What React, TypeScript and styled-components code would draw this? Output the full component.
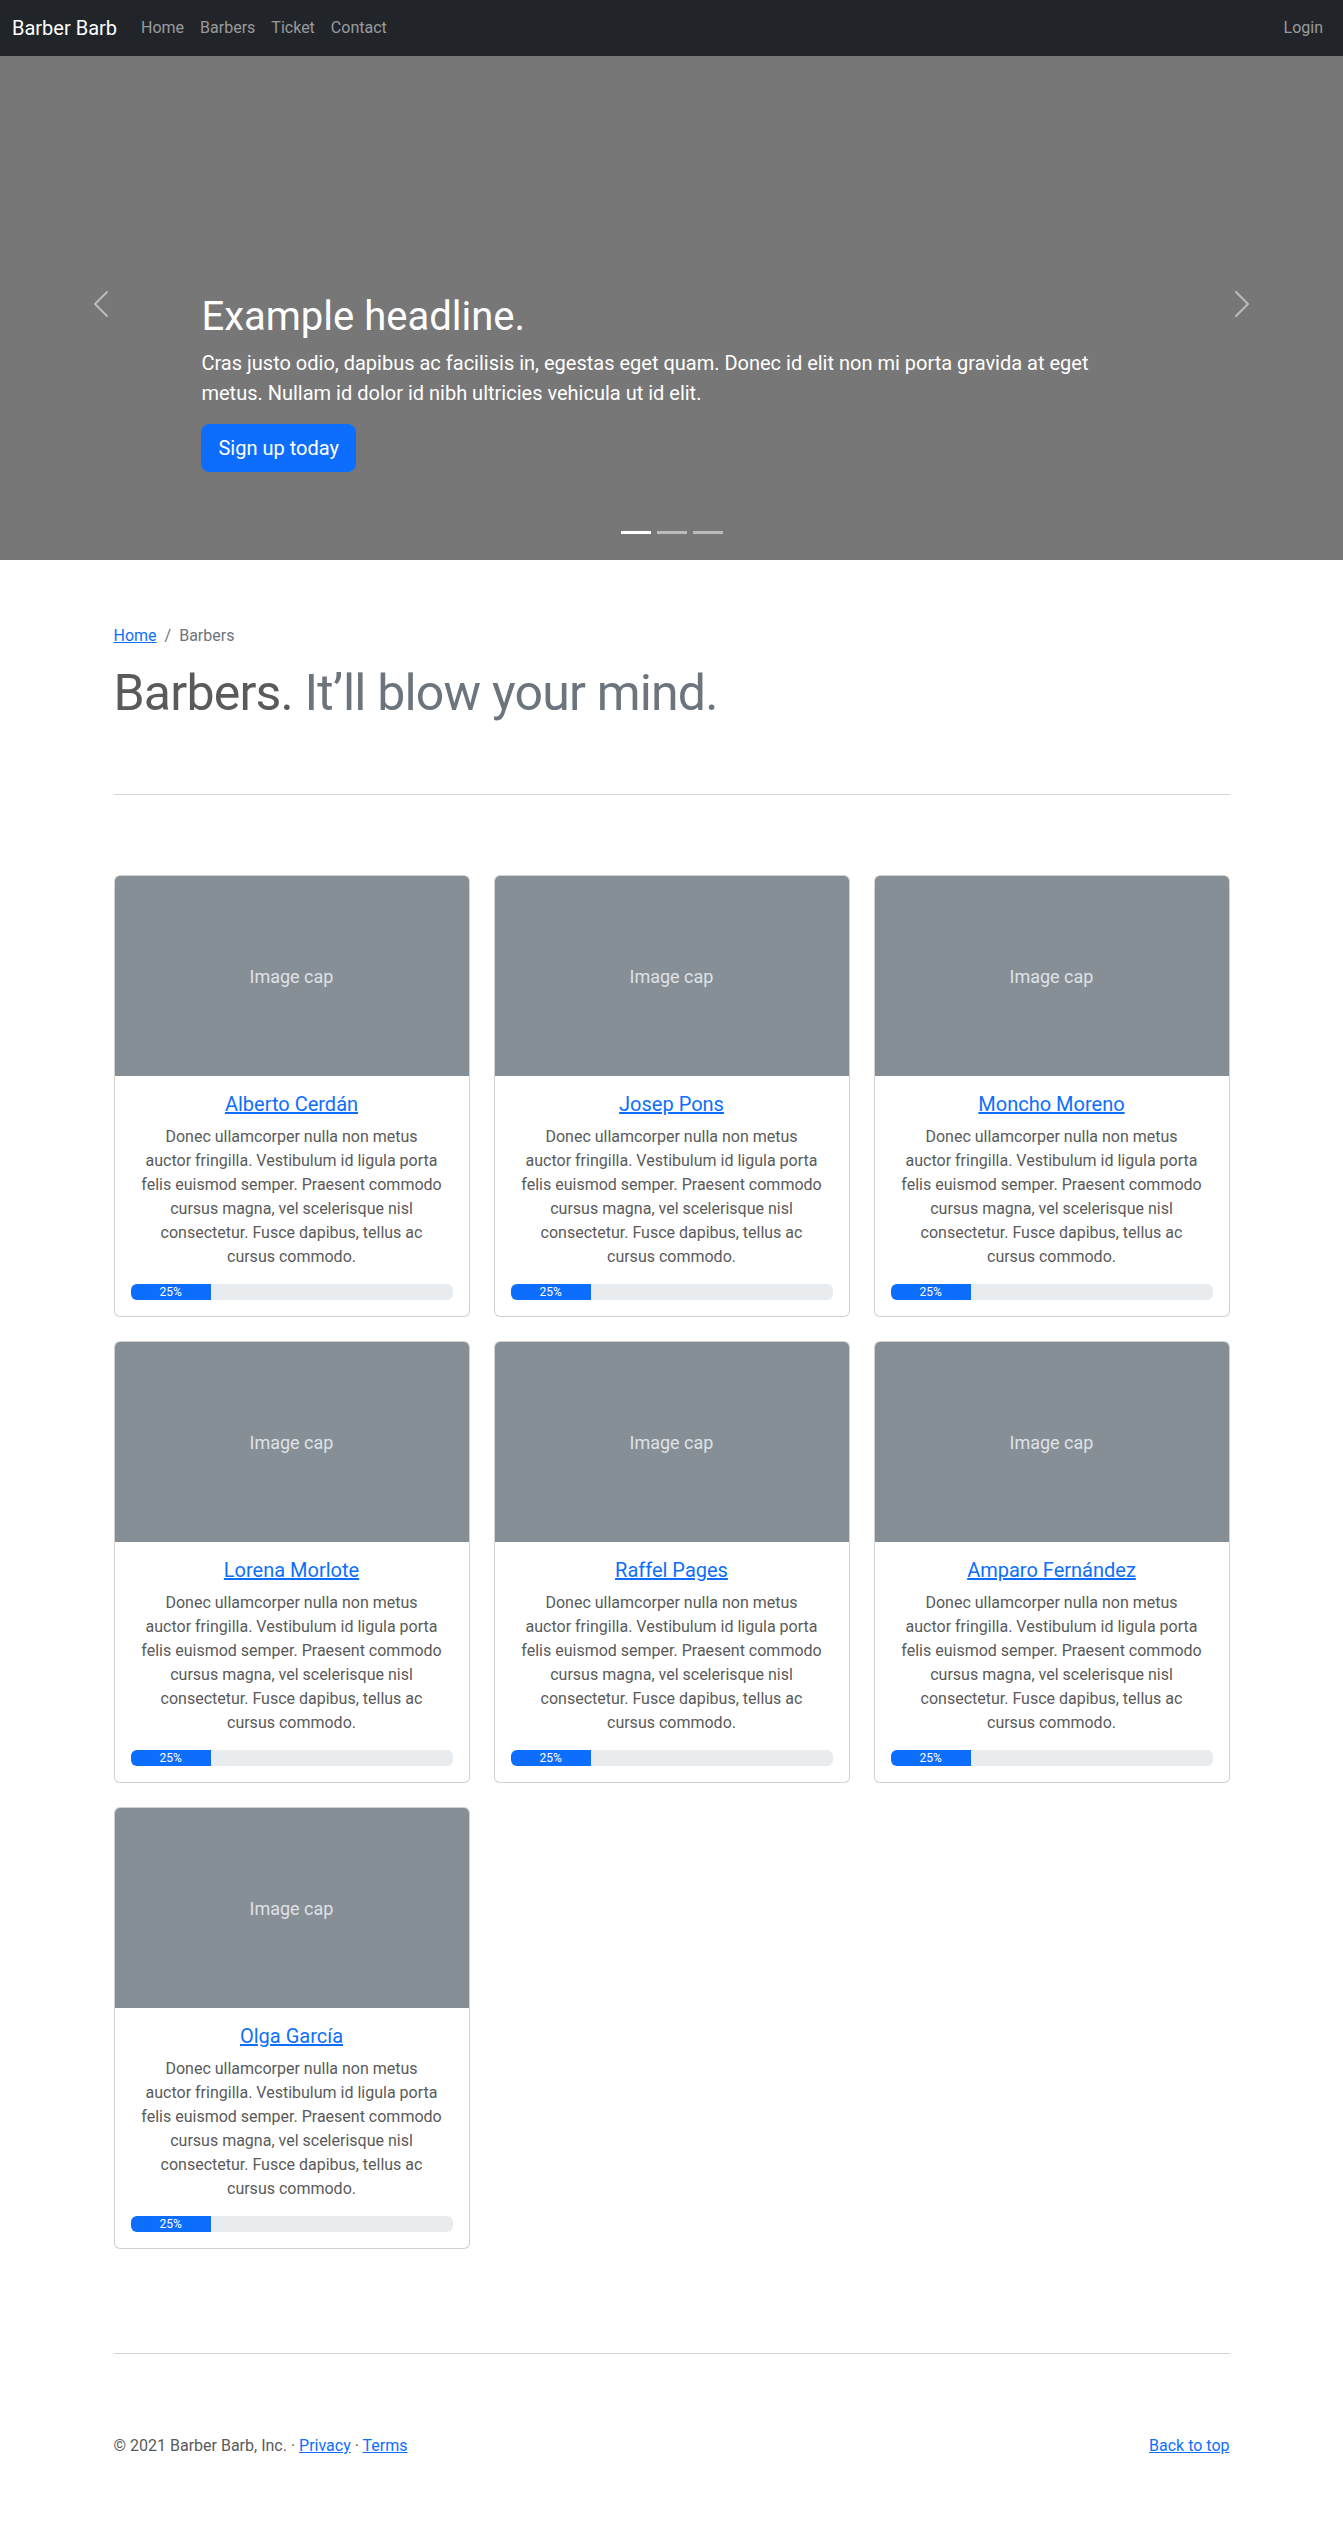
import React from 'react'
import styled, { createGlobalStyle } from 'styled-components'

const GlobalStyle = createGlobalStyle`
  *, *::before, *::after { box-sizing: border-box; }
  body {
    margin: 0;
    padding: 48px 0;
    font-family: Roboto, 'Liberation Sans', Arial, sans-serif;
    font-size: 16px;
    line-height: 1.5;
    color: #5a5a5a;
    background: #fff;
  }
`

const Link = styled.a`
  color: #0d6efd;
  text-decoration: underline;
  cursor: pointer;
`

/* navbar */
const Navbar = styled.nav`
  position: fixed;
  top: 0;
  left: 0;
  right: 0;
  z-index: 1030;
  height: 56px;
  padding: 8px 12px;
  display: flex;
  align-items: center;
  background: #212529;
`
const Brand = styled.a`
  margin-right: 16px;
  padding: 5px 0;
  font-size: 20px;
  line-height: 30px;
  color: #fff;
  text-decoration: none;
`
const NavList = styled.div`
  display: flex;
  flex: 1;
  align-items: center;
`
const NavLink = styled.a`
  padding: 8px;
  line-height: 24px;
  color: rgba(255, 255, 255, 0.55);
  text-decoration: none;
`

/* carousel */
const Carousel = styled.section`
  position: relative;
  height: 512px;
  margin-bottom: 64px;
  padding: 0 15% 48px;
  display: flex;
  align-items: flex-end;
  background: #777;
`
const Caption = styled.div`
  width: 100%;
  padding: 20px 0;
  color: #fff;
`
const Headline = styled.h1`
  margin: 0 0 8px;
  padding-top: 2px;
  font-size: 40px;
  font-weight: 400;
  line-height: 46px;
`
const Lead = styled.p`
  margin: 0 0 16px;
  font-size: 20px;
  line-height: 1.5;
`
const ButtonRow = styled.p`
  margin: 0 0 20px;
`
const PrimaryButton = styled.a`
  display: inline-block;
  padding: 8px 16px;
  font-size: 20px;
  line-height: 30px;
  border: 1px solid #0d6efd;
  border-radius: 8px;
  background: #0d6efd;
  color: #fff;
  text-decoration: none;
`
const Control = styled.button<{ $side: 'prev' | 'next' }>`
  position: absolute;
  top: 0;
  bottom: 0;
  ${p => (p.$side === 'prev' ? 'left: 0;' : 'right: 0;')}
  width: 15%;
  padding: 0;
  border: 0;
  background: none;
  display: flex;
  align-items: center;
  justify-content: center;
  opacity: 0.5;
`
const Indicators = styled.div`
  position: absolute;
  left: 0;
  right: 0;
  bottom: 0;
  margin-bottom: 16px;
  display: flex;
  justify-content: center;
`
const Indicator = styled.span<{ $active?: boolean }>`
  box-sizing: content-box;
  width: 30px;
  height: 3px;
  margin: 0 3px;
  border-top: 10px solid transparent;
  border-bottom: 10px solid transparent;
  background: #fff;
  background-clip: padding-box;
  opacity: ${p => (p.$active ? 1 : 0.5)};
`

/* page */
const Container = styled.div`
  max-width: 1140px;
  margin: 0 auto;
  padding: 0 12px;
`
const Breadcrumb = styled.ol`
  display: flex;
  margin: 0 0 16px;
  padding: 0;
  list-style: none;
`
const Crumb = styled.li<{ $active?: boolean }>`
  color: ${p => (p.$active ? '#6c757d' : 'inherit')};
  &:not(:first-child) {
    padding-left: 8px;
  }
  &:not(:first-child)::before {
    content: '/';
    padding-right: 8px;
    color: #6c757d;
  }
`
const FeatureHeading = styled.h2`
  margin: 0 0 -4px;
  padding-top: 4px;
  font-size: 50px;
  font-weight: 400;
  line-height: 1;
  letter-spacing: -0.8px;
`
const Muted = styled.span`
  color: #6c757d;
`
const Divider = styled.hr`
  margin: 80px 0;
  height: 0;
  border: 0;
  border-top: 1px solid #5a5a5a;
  opacity: 0.25;
`

/* cards */
const CardGrid = styled.div`
  display: grid;
  grid-template-columns: repeat(3, 1fr);
  gap: 24px;
  padding-bottom: 24px;
  align-items: start;
`
const Card = styled.div`
  display: flex;
  flex-direction: column;
  border: 1px solid rgba(0, 0, 0, 0.175);
  border-radius: 6px;
  overflow: hidden;
  background: #fff;
`
const ImageCap = styled.div`
  height: 200px;
  display: flex;
  align-items: center;
  justify-content: center;
  background: #868e96;
  color: #dee2e6;
  font-size: 18px;
`
const CardBody = styled.div`
  padding: 16px;
  text-align: center;
`
const CardTitle = styled.h5`
  margin: 0 0 8px;
  padding-top: 1px;
  font-size: 20px;
  font-weight: 400;
  line-height: 23px;
`
const CardText = styled.p`
  margin: 0 0 16px;
  padding-top: 1px;
  line-height: 24px;
  & > span {
    display: block;
  }
`
const Progress = styled.div`
  height: 16px;
  margin-top: -1px;
  display: flex;
  overflow: hidden;
  border-radius: 6px;
  background: #e9ecef;
  font-size: 12px;
`
const ProgressBar = styled.div`
  display: flex;
  flex-direction: column;
  justify-content: center;
  background: #0d6efd;
  color: #fff;
  text-align: center;
  white-space: nowrap;
`

/* footer */
const Footer = styled.footer`
  display: flex;
  justify-content: space-between;
`
const FooterText = styled.p`
  margin: 0 0 16px;
`

const ChevronLeft = () => (
  <svg width="32" height="32" viewBox="0 0 16 16" fill="#fff">
    <path d="M11.354 1.646a.5.5 0 0 1 0 .708L5.707 8l5.647 5.646a.5.5 0 0 1-.708.708l-6-6a.5.5 0 0 1 0-.708l6-6a.5.5 0 0 1 .708 0z" />
  </svg>
)

const ChevronRight = () => (
  <svg width="32" height="32" viewBox="0 0 16 16" fill="#fff">
    <path d="M4.646 1.646a.5.5 0 0 1 .708 0l6 6a.5.5 0 0 1 0 .708l-6 6a.5.5 0 0 1-.708-.708L10.293 8 4.646 2.354a.5.5 0 0 1 0-.708z" />
  </svg>
)

const barbers = [
  'Alberto Cerdán',
  'Josep Pons',
  'Moncho Moreno',
  'Lorena Morlote',
  'Raffel Pages',
  'Amparo Fernández',
  'Olga García',
]

const bioLines = [
  'Donec ullamcorper nulla non metus',
  'auctor fringilla. Vestibulum id ligula porta',
  'felis euismod semper. Praesent commodo',
  'cursus magna, vel scelerisque nisl',
  'consectetur. Fusce dapibus, tellus ac',
  'cursus commodo.',
]

function BarberCard({ name, progress }: { name: string; progress: number }) {
  return (
    <Card>
      <ImageCap>Image cap</ImageCap>
      <CardBody>
        <CardTitle>
          <Link>{name}</Link>
        </CardTitle>
        <CardText>
          {bioLines.map((line, i) => (
            <span key={i}>{line} </span>
          ))}
        </CardText>
        <Progress>
          <ProgressBar style={{ width: `${progress}%` }}>{progress}%</ProgressBar>
        </Progress>
      </CardBody>
    </Card>
  )
}

export default function App() {
  return (
    <>
      <GlobalStyle />
      <Navbar>
        <Brand>Barber Barb</Brand>
        <NavList>
          <NavLink>Home</NavLink>
          <NavLink>Barbers</NavLink>
          <NavLink>Ticket</NavLink>
          <NavLink>Contact</NavLink>
        </NavList>
        <NavLink>Login</NavLink>
      </Navbar>

      <Carousel>
        <Caption>
          <Headline>Example headline.</Headline>
          <Lead>
            Cras justo odio, dapibus ac facilisis in, egestas eget quam. Donec id elit non mi porta gravida at eget
            <br />
            metus. Nullam id dolor id nibh ultricies vehicula ut id elit.
          </Lead>
          <ButtonRow>
            <PrimaryButton>Sign up today</PrimaryButton>
          </ButtonRow>
        </Caption>
        <Control $side="prev" aria-label="Previous">
          <ChevronLeft />
        </Control>
        <Control $side="next" aria-label="Next">
          <ChevronRight />
        </Control>
        <Indicators>
          <Indicator $active />
          <Indicator />
          <Indicator />
        </Indicators>
      </Carousel>

      <Container>
        <Breadcrumb>
          <Crumb>
            <Link>Home</Link>
          </Crumb>
          <Crumb $active>Barbers</Crumb>
        </Breadcrumb>
        <FeatureHeading>
          Barbers. <Muted>It’ll blow your mind.</Muted>
        </FeatureHeading>

        <Divider />

        <CardGrid>
          {barbers.map(name => (
            <BarberCard key={name} name={name} progress={25} />
          ))}
        </CardGrid>

        <Divider />

        <Footer>
          <FooterText>
            © 2021 Barber Barb, Inc. · <Link>Privacy</Link> · <Link>Terms</Link>
          </FooterText>
          <FooterText>
            <Link>Back to top</Link>
          </FooterText>
        </Footer>
      </Container>
    </>
  )
}
